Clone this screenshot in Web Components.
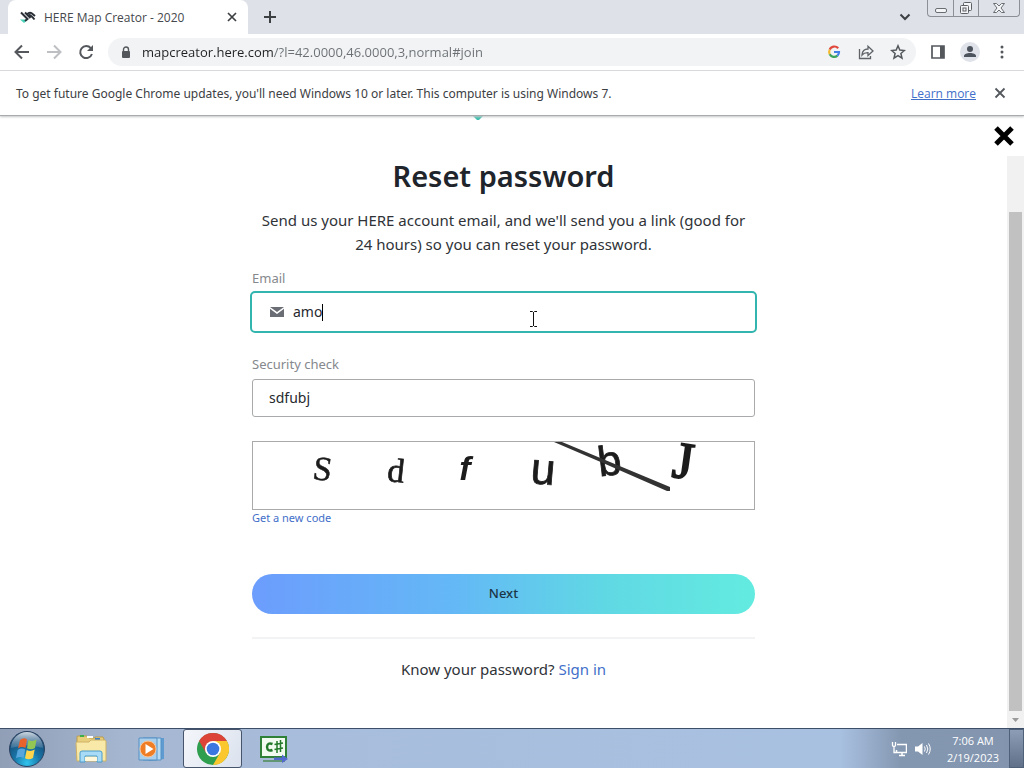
<!DOCTYPE html>
<html lang="en">
<head>
<meta charset="utf-8">
<meta name="viewport" content="width=device-width, initial-scale=1">
<title>HERE Map Creator - 2020</title>
<style>
  html, body {
    margin: 0;
    height: 100%;
    overflow: hidden;
  }
  body {
    --ui-font: "Open Sans", "Noto Sans", sans-serif;
    --page-font: "Noto Sans", "Open Sans", sans-serif;
    --link: #3f6fc9;
    --grey: #5f6368;
    --accent: #33b5af;
    font-family: var(--ui-font);
    color: #202124;
    background: #fff;
  }
</style>
</head>
<body>
<desktop-screen>
  <browser-tab slot="tabs" title="HERE Map Creator - 2020"></browser-tab>
  <browser-toolbar slot="toolbar" url="mapcreator.here.com/?l=42.0000,46.0000,3,normal#join"></browser-toolbar>
  <info-bar slot="infobar">To get future Google Chrome updates, you'll need Windows 10 or later. This computer is using Windows 7.</info-bar>
  <page-view slot="page">
    <reset-form></reset-form>
  </page-view>
  <task-bar slot="taskbar"></task-bar>
</desktop-screen>

<script>
class BaseElement extends HTMLElement {
  constructor() {
    super();
    this.attachShadow({ mode: 'open' });
  }

  connectedCallback() {
    this.shadowRoot.innerHTML = `
      <style>
        :host, * { box-sizing: border-box; }
        button {
          border: 0;
          padding: 0;
          margin: 0;
          background: none;
          font: inherit;
          color: inherit;
          display: flex;
          align-items: center;
          justify-content: center;
        }
        input { font: inherit; color: inherit; }
        svg { display: block; flex: none; }
      </style>
      ${this.render()}
    `;
  }
}

class DesktopScreen extends BaseElement {
  render() {
    return `
      <style>
        :host {
          display: flex;
          flex-direction: column;
          height: 100vh;
        }
        .strip {
          display: flex;
          height: 34px;
          padding-left: 8px;
          background: #dee1e8;
        }
        .new-tab { width: 28px; margin-left: 8px; }
        .tab-search { width: 32px; margin-left: auto; margin-right: 6px; }
        .controls {
          display: flex;
          height: 17px;
          margin-right: 4px;
          border: 1px solid #8c9096;
          border-top: 0;
          border-radius: 0 0 4px 4px;
        }
        .controls button { width: 25px; }
        .controls button + button { border-left: 1px solid #8c9096; }
        .controls button:last-child { width: 41px; }
        ::slotted([slot="page"]) { flex: 1; min-height: 0; }
      </style>
      <div class="strip">
        <slot name="tabs"></slot>
        <button class="new-tab" aria-label="New tab">
          <svg width="14" height="14" viewBox="0 0 14 14" stroke="#3c4043" stroke-width="2"><path d="M7 1v12M1 7h12"/></svg>
        </button>
        <button class="tab-search" aria-label="Search tabs">
          <svg width="12" height="8" viewBox="0 0 12 8" fill="none" stroke="#3c4043" stroke-width="2"><path d="M1.500 1.500L6 6l4.500-4.500"/></svg>
        </button>
        <div class="controls">
          <button aria-label="Minimize">
            <svg width="14" height="12" viewBox="0 0 14 12" fill="#f4f5f7" stroke="#6a6d72"><rect x="1.500" y="6.500" width="11" height="4" rx="1.500"/></svg>
          </button>
          <button aria-label="Restore">
            <svg width="14" height="14" viewBox="0 0 14 14" fill="#f4f5f7" stroke="#5c5f64"><rect x="4.500" y="1.500" width="8" height="8" rx="1"/><rect x="1.500" y="4.500" width="8" height="8" rx="1"/><rect x="4" y="7" width="3" height="3"/></svg>
          </button>
          <button aria-label="Close">
            <svg width="14" height="12" viewBox="0 0 14 12" fill="#f4f5f7" stroke="#6a6d72"><path d="M1.500 1.500h3L7 4l2.500-2.500h3L9 6l3.500 4.500h-3L7 8l-2.500 2.500h-3L5 6z"/></svg>
          </button>
        </div>
      </div>
      <slot name="toolbar"></slot>
      <slot name="infobar"></slot>
      <slot name="page"></slot>
      <slot name="taskbar"></slot>
    `;
  }
}

class BrowserTab extends BaseElement {
  render() {
    return `
      <style>
        :host {
          display: flex;
          align-items: center;
          width: 240px;
          height: 34px;
          padding: 0 6px 0 12px;
          border-radius: 8px 8px 0 0;
          background: #fff;
          font-size: 12px;
          color: #45484c;
        }
        span { flex: 1; margin-left: 8px; white-space: nowrap; }
        button { width: 20px; height: 20px; }
      </style>
      <svg width="16" height="16" viewBox="0 0 16 16"><path d="M0 10.500h8L4 14z" fill="#48d0b8"/><path d="M1 3.500l6.500 6.500L5 12M5 3.500l5.500 5.500M7 5.500q2.500-3 5-1l3 2.500M9 6q1.500-.5 5.500 4.500" fill="none" stroke="#2b3038" stroke-width="2"/></svg>
      <span>${this.getAttribute('title')}</span>
      <button aria-label="Close tab">
        <svg width="10" height="10" viewBox="0 0 10 10" stroke="#3c4043" stroke-width="1.700"><path d="M1 1l8 8M9 1L1 9"/></svg>
      </button>
    `;
  }
}

class BrowserToolbar extends BaseElement {
  render() {
    return `
      <style>
        :host {
          display: flex;
          align-items: center;
          height: 37px;
          padding: 0 6px;
          border-bottom: 1px solid #d9dbde;
          background: #fff;
        }
        button, .lock { width: 32px; height: 28px; flex: none; }
        .lock { display: flex; align-items: center; justify-content: center; }
        .omnibox {
          flex: 1;
          display: flex;
          margin: 0 6px;
          padding: 0 2px;
          border-radius: 14px;
          background: #f1f3f4;
        }
        input {
          flex: 1;
          min-width: 0;
          padding: 0;
          border: 0;
          outline: 0;
          font-size: 13px;
          color: var(--grey);
          /* host part darker than the path */
          background: linear-gradient(90deg, #202124 132px, #6b6f74 132px);
          -webkit-background-clip: text;
          background-clip: text;
          -webkit-text-fill-color: transparent;
        }
      </style>
      <button aria-label="Back">
        <svg width="16" height="16" viewBox="0 0 16 16" fill="none" stroke="#54585d" stroke-width="2"><path d="M15 8H2M8 1.500L1.500 8 8 14.500"/></svg>
      </button>
      <button aria-label="Forward" disabled>
        <svg width="16" height="16" viewBox="0 0 16 16" fill="none" stroke="#bdbfc2" stroke-width="2"><path d="M1 8h13M8 1.500L14.500 8 8 14.500"/></svg>
      </button>
      <button aria-label="Reload">
        <svg width="16" height="16" viewBox="0 0 16 16"><path d="M12.800 4.200A6 6 0 1 0 13.900 10" fill="none" stroke="#54585d" stroke-width="2"/><path d="M15 1v6H9z" fill="#54585d"/></svg>
      </button>
      <div class="omnibox">
        <div class="lock">
          <svg width="10" height="13" viewBox="0 0 10 13"><path d="M2.500 6V3.500a2.500 2.500 0 0 1 5 0V6" fill="none" stroke="#54585d" stroke-width="1.400"/><rect x="1" y="5" width="8" height="7" rx="1" fill="#54585d"/></svg>
        </div>
        <input type="text" aria-label="Address" value="${this.getAttribute('url')}">
        <button aria-label="Search with Google">
          <svg width="14" height="14" viewBox="0 0 14 14" fill="none" stroke-width="2.200"><path d="M11.200 3.300A5 5 0 0 0 2.700 4.700" stroke="#e0483b"/><path d="M2.700 4.700A5 5 0 0 0 2.700 9.300" stroke="#f3ba2f"/><path d="M2.700 9.300A5 5 0 0 0 10.400 10.700" stroke="#3ba55c"/><path d="M10.400 10.700A5 5 0 0 0 12 7H7" stroke="#4380e8"/></svg>
        </button>
        <button aria-label="Share">
          <svg width="16" height="16" viewBox="0 0 16 16" fill="none" stroke="#5f6368" stroke-width="1.300"><path d="M1.500 5v9.500h11V12"/><path d="M4 11c.3-4 2.500-6 6-6V2.200L15 7l-5 4.500V8.600C7.500 8.500 5.500 9.200 4 11z"/></svg>
        </button>
        <button aria-label="Bookmark this page">
          <svg width="16" height="16" viewBox="0 0 16 16" fill="none" stroke="#54585d" stroke-width="1.500"><path d="M8 1.800l1.800 4.300 4.600.4-3.500 3 1.100 4.600L8 11.700l-4 2.400 1.100-4.600-3.500-3 4.600-.4z"/></svg>
        </button>
      </div>
      <button aria-label="Side panel">
        <svg width="14" height="14" viewBox="0 0 14 14"><path d="M1 1h12v12H1z" fill="none" stroke="#54585d" stroke-width="1.700"/><path d="M9 1h4v12H9z" fill="#54585d"/></svg>
      </button>
      <button aria-label="Profile">
        <svg width="20" height="20" viewBox="0 0 20 20"><circle cx="10" cy="10" r="10" fill="#dfe2e8"/><circle cx="10" cy="7" r="3" fill="#4d535c"/><path d="M4 15v-1c0-2 3-3 6-3s6 1 6 3v1z" fill="#4d535c"/></svg>
      </button>
      <button aria-label="Menu">
        <svg width="4" height="14" viewBox="0 0 4 14" fill="#54585d"><circle cx="2" cy="2" r="1.500"/><circle cx="2" cy="7" r="1.500"/><circle cx="2" cy="12" r="1.500"/></svg>
      </button>
    `;
  }
}

class InfoBar extends BaseElement {
  render() {
    return `
      <style>
        :host {
          display: flex;
          align-items: center;
          position: relative;
          z-index: 1;
          height: 45px;
          padding: 0 14px 0 16px;
          border-bottom: 1px solid #a9abad;
          box-shadow: 0 1px 2px #c4c6c8;
          background: #fff;
          font-size: 12px;
          color: #3c4043;
        }
        p { flex: 1; margin: 0; font-family: var(--page-font); }
        a { color: var(--link); margin-right: 14px; }
        button { width: 20px; height: 20px; }
      </style>
      <p><slot></slot></p>
      <a href="#learn-more">Learn more</a>
      <button aria-label="Dismiss">
        <svg width="12" height="12" viewBox="0 0 12 12" stroke="#54585d" stroke-width="1.800"><path d="M1.500 1.500l9 9M10.500 1.500l-9 9"/></svg>
      </button>
    `;
  }
}

class PageView extends BaseElement {
  render() {
    return `
      <style>
        :host {
          display: flex;
          position: relative;
          background: #fff;
        }
        main { flex: 1; overflow: hidden; }
        .close {
          position: absolute;
          top: 9px;
          right: 9px;
          width: 22px;
          height: 22px;
        }
        .scroll {
          display: flex;
          flex-direction: column;
          align-items: center;
          width: 17px;
          margin-top: 40px;
          padding-top: 56px;
          background: #f1f1f1;
        }
        .thumb { flex: 1; width: 13px; background: #c1c1c1; }
        .scroll button { width: 17px; height: 17px; }
      </style>
      <main><slot></slot></main>
      <div class="scroll">
        <div class="thumb"></div>
        <button aria-label="Scroll down">
          <svg width="7" height="4" viewBox="0 0 7 4"><path d="M0 0h7L3.500 4z" fill="#9a9a9a"/></svg>
        </button>
      </div>
      <button class="close" aria-label="Close dialog">
        <svg width="22" height="22" viewBox="0 0 22 22" stroke="#000" stroke-width="5"><path d="M3 3l16 16M19 3L3 19"/></svg>
      </button>
    `;
  }
}

class CaptchaImage extends BaseElement {
  render() {
    return `
      <style>
        :host {
          display: block;
          height: 69px;
          border: 1px solid #a8aaac;
        }
        svg { width: 100%; height: 67px; overflow: visible; }
        g { filter: blur(0.6px); }
        text { fill: #1c1c1c; text-anchor: middle; }
        .serif { font-family: "Liberation Serif", serif; }
        .sans { font-family: "Liberation Sans", sans-serif; }
      </style>
      <svg viewBox="0 0 501 67" role="img" aria-label="Security code">
        <g>
          <text class="serif" font-size="34" stroke="#1c1c1c" stroke-width="0.500" transform="translate(68 38) rotate(8)">S</text>
          <text class="serif" font-size="34" stroke="#1c1c1c" stroke-width="0.700" transform="translate(142 40) rotate(6)">d</text>
          <text class="sans" font-size="34" font-weight="bold" font-style="italic" transform="translate(212 38)">f</text>
          <text class="sans" font-size="44" stroke="#1c1c1c" stroke-width="0.800" transform="translate(289 42) rotate(5)">u</text>
          <text class="sans" font-size="42" stroke="#1c1c1c" stroke-width="0.800" transform="translate(358 33) rotate(-7)">b</text>
          <text class="serif" font-size="52" stroke="#1c1c1c" stroke-width="1.800" transform="translate(428 36) rotate(8)">J</text>
          <path d="M301 0h8l108 45 0 4-3 0-64-28z" fill="#333"/>
        </g>
      </svg>
    `;
  }
}

class ResetForm extends BaseElement {
  render() {
    return `
      <style>
        :host {
          display: flex;
          flex-direction: column;
          align-items: center;
          font-family: var(--page-font);
          font-size: 15px;
          line-height: 24px;
          color: #2f3338;
        }
        form {
          display: flex;
          flex-direction: column;
          width: 100%;
          max-width: 503px;
          padding-top: 36px;
        }
        h1 {
          margin: 0 0 12px;
          font-size: 29px;
          font-weight: 600;
          line-height: 40px;
          text-align: center;
          color: #20242b;
        }
        p { margin: 0 0 2px; text-align: center; }
        a { color: var(--link); text-decoration: none; }
        label {
          margin: 10px 0 5px;
          font-size: 13px;
          line-height: 20px;
          color: #85888c;
        }
        .field {
          display: flex;
          align-items: center;
          position: relative;
          height: 38px;
          padding: 0 16px;
          border: 1px solid #a8aaac;
          border-radius: 3px;
          font-size: 14px;
          color: #26292e;
        }
        .field input {
          flex: 1;
          min-width: 0;
          padding: 0;
          border: 0;
          outline: 0;
          background: none;
        }
        .email {
          border-color: transparent;
          outline: 2px solid var(--accent);
          margin-bottom: 13px;
        }
        .email input { flex: none; field-sizing: content; margin-left: 8px; }
        .caret { width: 1px; height: 17px; background: #000; }
        .pointer { position: absolute; left: 55%; top: 16px; }
        captcha-image { margin-top: 24px; }
        .new-code { font-size: 11px; line-height: 16px; }
        .next {
          height: 40px;
          margin-top: 48px;
          padding-bottom: 2px;
          border-radius: 20px;
          background: linear-gradient(90deg, #6c9dfd, #64b8f6 40%, #60d8e4 70%, #63ebe0);
          font-size: 13px;
          font-weight: 500;
          color: #1b3546;
        }
        .signin {
          margin-top: 23px;
          padding-top: 18px;
          border-top: 2px solid #f2f3f4;
        }
      </style>
      <svg width="64" height="4" viewBox="0 0 64 4"><path d="M1 0h10L7 4H5z" fill="#3fbfb0"/></svg>
      <form>
        <h1>Reset password</h1>
        <p>Send us your HERE account email, and we'll send you a link (good for 24 hours) so you can reset your password.</p>
        <label for="email">Email</label>
        <div class="field email">
          <svg width="16" height="10" viewBox="0 0 16 10" fill="#6a6d74"><path d="M1 0h14L8 5zM1 1.800L8 7l7-5.200V10H1z"/></svg>
          <input id="email" type="text" value="amo">
          <span class="caret"></span>
          <svg class="pointer" width="9" height="18" viewBox="0 0 9 18" fill="none" stroke="#111"><path d="M1 1.500h2.500l1 1 1-1H8M4.500 2v14M1 16.500h2.500l1-1 1 1H8"/></svg>
        </div>
        <label for="code">Security check</label>
        <div class="field">
          <input id="code" type="text" value="sdfubj">
        </div>
        <captcha-image></captcha-image>
        <a class="new-code" href="#new-code">Get a new code</a>
        <button class="next" type="button">Next</button>
        <p class="signin">Know your password? <a href="#sign-in">Sign in</a></p>
      </form>
    `;
  }
}

class TaskBar extends BaseElement {
  render() {
    return `
      <style>
        :host {
          display: flex;
          align-items: center;
          height: 40px;
          border-top: 1px solid #3d4f68;
          background: linear-gradient(90deg, #909eb6 0, #a5b6d0 12%, #a8bddc 30%, #a9c1e1 82%, #8497b1 88%, #8395ae);
          font-size: 11px;
          line-height: 17px;
          color: #fff;
        }
        .start { width: 54px; margin-right: 7px; }
        .apps { display: flex; gap: 2px; flex: 1; }
        .apps button { width: 59px; height: 39px; }
        .apps .active {
          border: 1px solid #46556c;
          border-radius: 3px;
          background: linear-gradient(120deg, #f4f6fa, #dbe2ee);
        }
        .tray { display: flex; align-items: center; }
        .tray button { width: 24px; height: 24px; }
        .clock { width: 74px; padding-left: 2px; text-align: center; }
        .desktop {
          align-self: stretch;
          width: 15px;
          border: 1px solid #4f6079;
          background: linear-gradient(#8d9db5, #5f7088);
        }
      </style>
      <button class="start" aria-label="Start">
        <svg width="38" height="38" viewBox="0 0 38 38">
          <defs>
            <radialGradient id="orb" cx="50%" cy="90%" r="85%"><stop offset="0" stop-color="#2fc4ee"/><stop offset=".45" stop-color="#1874a6"/><stop offset="1" stop-color="#163f68"/></radialGradient>
            <linearGradient id="gloss" x2="0" y2="1"><stop offset="0" stop-color="#e2e9f0" stop-opacity=".9"/><stop offset="1" stop-color="#8aa7bf" stop-opacity=".3"/></linearGradient>
          </defs>
          <circle cx="19" cy="19" r="17.500" fill="url(#orb)" stroke="#2a4260"/>
          <path d="M3 18a16 16 0 0 1 32 0q-16-5-32 0z" fill="url(#gloss)"/>
          <path d="M12 10q4-3 7-.5L17.500 18q-4-2-7.500.5z" fill="#e8622c"/>
          <path d="M20.500 10q4 2 8-.5L27 18q-4 2.500-8 .3z" fill="#93c653"/>
          <path d="M9.700 20q4-2.500 7.500-.5L15.500 28q-3.500-2-7.500.3z" fill="#57a5dd"/>
          <path d="M18.700 20q4 2 8-.5L25 28q-4 2.500-8 .3z" fill="#fcd54c"/>
        </svg>
      </button>
      <div class="apps">
        <button aria-label="Windows Explorer">
          <svg width="34" height="30" viewBox="0 0 34 30">
            <path d="M3 3q0-1 1-1h9l2 2h6V3h8l1 2v20H3z" fill="#e8cf7c" stroke="#b99b4d"/>
            <path d="M6 2h4" stroke="#3fae49" stroke-width="2"/><path d="M13 3h6" stroke="#fff" stroke-width="2"/><path d="M21 5h5" stroke="#3b80c8" stroke-width="2"/>
            <path d="M2 9q0-1 1-1h12l2-2h14l1 1v20H3z" fill="#f8e9a9" stroke="#cfb267"/>
            <path d="M6 28v-9q0-2 2-2h18q2 0 2 2v9h-5v-6H11v6z" fill="#a8dbf5" stroke="#4b9ccb"/>
            <path d="M11 27v-4h12v4z" fill="#fff8da"/>
          </svg>
        </button>
        <button aria-label="Windows Media Player">
          <svg width="28" height="26" viewBox="0 0 28 26">
            <path d="M8 2h18v21l-15 2z" fill="#5f9ad0"/><path d="M5 2h18v22H5z" fill="#b8dbf3" stroke="#5791c4"/><path d="M1 2h18v22H1z" fill="#a9cfec" stroke="#5791c4"/>
            <circle cx="10" cy="13" r="8" fill="#ee7d25" stroke="#f8c59b"/><path d="M7.500 8l8 5-8 5z" fill="#fff"/>
          </svg>
        </button>
        <button class="active" aria-label="Google Chrome">
          <svg width="32" height="32" viewBox="0 0 32 32">
            <circle cx="16" cy="16" r="16" fill="#2f9e4f"/>
            <path d="M2.140 8A16 16 0 0 1 29.860 8L16 8 9.100 20z" fill="#dc4437"/>
            <path d="M29.860 8A16 16 0 0 1 16 32L22.900 20 16 8z" fill="#fbc72f"/>
            <circle cx="16" cy="16" r="8" fill="#fff"/><circle cx="16" cy="16" r="6.300" fill="#3a77e0"/>
          </svg>
        </button>
        <button aria-label="C# application">
          <svg width="30" height="28" viewBox="0 0 30 28">
            <rect x="2" y="2" width="25" height="20" fill="#f1fbef" stroke="#2f8138" stroke-width="2"/>
            <path d="M4 26h22" stroke="#4c8a52" stroke-width="1.500"/>
            <path d="M13.500 9q-5-2-5.500 3 .5 5 5.500 3" fill="none" stroke="#237a2b" stroke-width="2.500"/>
            <path d="M18 6v12M21.500 5v12M15.500 9.500l8.500-1.500M15.500 14.500l8.500-1.500" stroke="#237a2b" stroke-width="1.500"/>
            <path d="M15 22.500h8v-3l6 4.500-6 4v-3h-8z" fill="#5269cf"/>
          </svg>
        </button>
      </div>
      <div class="tray">
        <button aria-label="Network">
          <svg width="16" height="16" viewBox="0 0 16 16" fill="none" stroke="#fff"><path d="M6 3.500h9.500v8H5.500V9M8 14.500h6M11 12v2" stroke-width="1.500"/><path d="M1.500 1v3q0 1.500 1.500 1.500T4.500 4V1M3 5v6.500h2" stroke-width="1.300"/></svg>
        </button>
        <button aria-label="Volume">
          <svg width="16" height="14" viewBox="0 0 16 14"><path d="M0 4.500h3L7.500 1v12L3 9.500H0z" fill="#fff"/><path d="M9.500 4.500q1.500 2.500 0 5M11.500 3q2.700 4 0 8M13.500 1.500q3.500 5.500 0 11" fill="none" stroke="#fff"/></svg>
        </button>
        <div class="clock">7:06 AM<br>2/19/2023</div>
      </div>
      <button class="desktop" aria-label="Show desktop"></button>
    `;
  }
}

customElements.define('desktop-screen', DesktopScreen);
customElements.define('browser-tab', BrowserTab);
customElements.define('browser-toolbar', BrowserToolbar);
customElements.define('info-bar', InfoBar);
customElements.define('page-view', PageView);
customElements.define('captcha-image', CaptchaImage);
customElements.define('reset-form', ResetForm);
customElements.define('task-bar', TaskBar);
</script>
</body>
</html>
